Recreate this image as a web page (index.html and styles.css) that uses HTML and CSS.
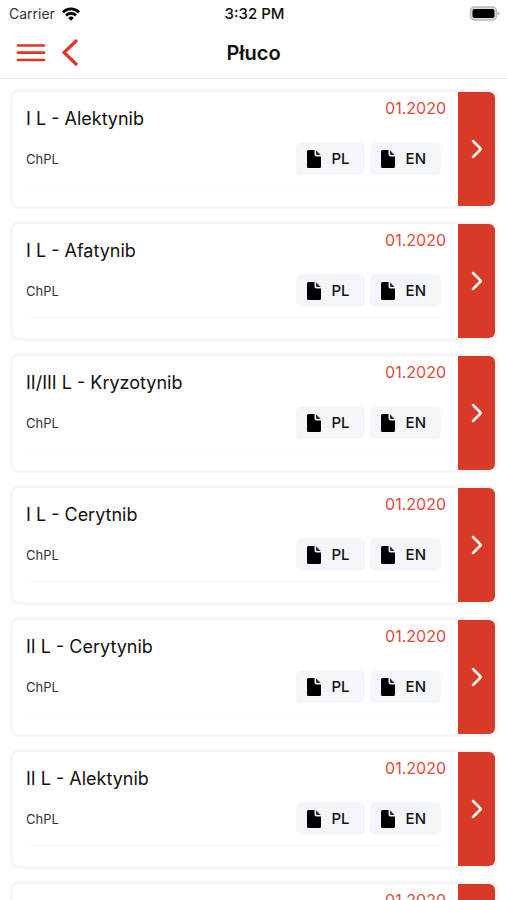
FILE: index.html
```html
<!DOCTYPE html>
<html lang="pl">
<head>
    <meta charset="UTF-8">
    <meta name="viewport" content="width=device-width, initial-scale=1.0">
    <title>Płuco</title>
    <link rel="stylesheet" href="styles.css">
</head>
<body>
    <!-- Shared icons -->
    <svg class="icon-defs" aria-hidden="true">
        <symbol id="icon-file" viewBox="0 0 14 18">
            <path d="M1.500 0H7.500v4.500Q7.500 6.500 9.500 6.500H14v10Q14 18 12.500 18h-11Q0 18 0 16.500v-15Q0 0 1.500 0z"/>
            <path d="M9 0.300 13.700 5H10Q9 5 9 4z" opacity="0.800"/>
        </symbol>
        <symbol id="icon-next" viewBox="0 0 12 20">
            <path d="M2 2l8 8-8 8" fill="none" stroke="currentColor" stroke-width="2.500" stroke-linecap="round" stroke-linejoin="round"/>
        </symbol>
    </svg>

    <div class="status-bar">
        <div class="carrier">
            <span>Carrier</span>
            <svg width="18" height="14" viewBox="0 0 18 14" fill="none" stroke="#000" stroke-width="2.700">
                <path d="M1 5.200a11.300 11.300 0 0 1 16 0"/>
                <path d="M4 8.500a7.100 7.100 0 0 1 10 0"/>
                <path d="M9 13.800 6.200 10.900a4 4 0 0 1 5.600 0z" fill="#000" stroke="none"/>
            </svg>
        </div>
        <div class="time">3:32 PM</div>
        <div class="battery">
            <svg width="31" height="15" viewBox="0 0 31 15">
                <rect x="1.500" y="1" width="26" height="13" rx="4" fill="#ddd" stroke="#b8b8b8" stroke-width="1.300"/>
                <rect x="3.500" y="3" width="22" height="9" rx="2" fill="#000"/>
                <path d="M28.500 5.500q2 0.500 2 2t-2 2z" fill="#b4b4b4"/>
            </svg>
        </div>
    </div>

    <header class="nav-bar">
        <div class="nav-buttons">
            <button type="button" aria-label="Menu">
                <svg width="30" height="20" viewBox="0 0 30 20" fill="none" stroke="currentColor" stroke-width="2.700" stroke-linecap="round">
                    <path d="M2 2.500h26M2 9.700h26M2 17h26"/>
                </svg>
            </button>
            <button type="button" aria-label="Wstecz">
                <svg width="16" height="28" viewBox="0 0 16 28" fill="none" stroke="currentColor" stroke-width="3.300" stroke-linecap="round">
                    <path d="M14 2 2 13.500l12 11.500"/>
                </svg>
            </button>
        </div>
        <h1>Płuco</h1>
    </header>

    <main class="list">
        <article class="card">
            <div class="card-body">
                <div class="card-head">
                    <h2>I L - Alektynib</h2>
                    <span class="date">01.2020</span>
                </div>
                <div class="card-docs">
                    <span class="doc-label">ChPL</span>
                    <button type="button" class="doc-btn"><svg><use href="#icon-file"/></svg>PL</button>
                    <button type="button" class="doc-btn"><svg><use href="#icon-file"/></svg>EN</button>
                </div>
            </div>
            <button type="button" class="next-btn" aria-label="Dalej"><svg><use href="#icon-next"/></svg></button>
        </article>

        <article class="card">
            <div class="card-body">
                <div class="card-head">
                    <h2>I L - Afatynib</h2>
                    <span class="date">01.2020</span>
                </div>
                <div class="card-docs">
                    <span class="doc-label">ChPL</span>
                    <button type="button" class="doc-btn"><svg><use href="#icon-file"/></svg>PL</button>
                    <button type="button" class="doc-btn"><svg><use href="#icon-file"/></svg>EN</button>
                </div>
            </div>
            <button type="button" class="next-btn" aria-label="Dalej"><svg><use href="#icon-next"/></svg></button>
        </article>

        <article class="card">
            <div class="card-body">
                <div class="card-head">
                    <h2>II/III L - Kryzotynib</h2>
                    <span class="date">01.2020</span>
                </div>
                <div class="card-docs">
                    <span class="doc-label">ChPL</span>
                    <button type="button" class="doc-btn"><svg><use href="#icon-file"/></svg>PL</button>
                    <button type="button" class="doc-btn"><svg><use href="#icon-file"/></svg>EN</button>
                </div>
            </div>
            <button type="button" class="next-btn" aria-label="Dalej"><svg><use href="#icon-next"/></svg></button>
        </article>

        <article class="card">
            <div class="card-body">
                <div class="card-head">
                    <h2>I L - Cerytnib</h2>
                    <span class="date">01.2020</span>
                </div>
                <div class="card-docs">
                    <span class="doc-label">ChPL</span>
                    <button type="button" class="doc-btn"><svg><use href="#icon-file"/></svg>PL</button>
                    <button type="button" class="doc-btn"><svg><use href="#icon-file"/></svg>EN</button>
                </div>
            </div>
            <button type="button" class="next-btn" aria-label="Dalej"><svg><use href="#icon-next"/></svg></button>
        </article>

        <article class="card">
            <div class="card-body">
                <div class="card-head">
                    <h2>II L - Cerytynib</h2>
                    <span class="date">01.2020</span>
                </div>
                <div class="card-docs">
                    <span class="doc-label">ChPL</span>
                    <button type="button" class="doc-btn"><svg><use href="#icon-file"/></svg>PL</button>
                    <button type="button" class="doc-btn"><svg><use href="#icon-file"/></svg>EN</button>
                </div>
            </div>
            <button type="button" class="next-btn" aria-label="Dalej"><svg><use href="#icon-next"/></svg></button>
        </article>

        <article class="card">
            <div class="card-body">
                <div class="card-head">
                    <h2>II L - Alektynib</h2>
                    <span class="date">01.2020</span>
                </div>
                <div class="card-docs">
                    <span class="doc-label">ChPL</span>
                    <button type="button" class="doc-btn"><svg><use href="#icon-file"/></svg>PL</button>
                    <button type="button" class="doc-btn"><svg><use href="#icon-file"/></svg>EN</button>
                </div>
            </div>
            <button type="button" class="next-btn" aria-label="Dalej"><svg><use href="#icon-next"/></svg></button>
        </article>

        <article class="card">
            <div class="card-body">
                <div class="card-head">
                    <span class="date">01.2020</span>
                </div>
            </div>
            <button type="button" class="next-btn" aria-label="Dalej"></button>
        </article>
    </main>
</body>
</html>
```
FILE: styles.css
```css
* {
    box-sizing: border-box;
}
body {
    margin: 0;
    height: 100vh;
    display: flex;
    flex-direction: column;
    background: #fefefe;
    color: #111;
    font-family: Inter, "Liberation Sans", sans-serif;
}
button {
    border: none;
    padding: 0;
    background: none;
    color: inherit;
    font: inherit;
    cursor: pointer;
}
svg {
    display: block;
}
.icon-defs {
    display: none;
}

/* Status bar */
.status-bar {
    display: grid;
    grid-template-columns: 1fr auto 1fr;
    align-items: center;
    height: 27px;
    padding: 0 7px 0 9px;
    font-size: 14px;
}
.carrier {
    display: flex;
    align-items: center;
    gap: 7px;
    color: #333;
}
.time {
    font-size: 15px;
    font-weight: 500;
}
.battery {
    justify-self: end;
}

/* Navigation */
.nav-bar {
    display: grid;
    grid-template-columns: 1fr auto 1fr;
    align-items: center;
    height: 52px;
    padding: 0 16px;
    border-bottom: 1px solid #ececec;
}
.nav-buttons {
    display: flex;
    align-items: center;
    gap: 16px;
    color: #d93a28;
}
h1 {
    margin: 0;
    font-size: 20px;
    font-weight: 600;
}

/* Cards */
.list {
    flex: 1;
    min-height: 0;
    display: flex;
    flex-direction: column;
    gap: 18px;
    padding: 13px 12px 13px 13px;
    overflow-y: auto;
    scrollbar-width: none;
}
.card {
    display: flex;
    flex: none;
    min-height: 114px;
    border-radius: 6px;
    background: #fff;
    box-shadow: 0 0 2px 3px #f6f6f6;
}
.card-body {
    flex: 1;
    padding: 6px 12px 0 13px;
}
.card-head {
    display: flex;
    justify-content: space-between;
    height: 44px;
}
h2 {
    margin: 0;
    padding-top: 9px;
    font-size: 18px;
    font-weight: 400;
    line-height: 24px;
}
.date {
    margin-left: auto;
    color: #e04a3a;
    font-size: 16px;
    line-height: 20px;
}
.card-docs {
    display: flex;
    align-items: center;
    gap: 5px;
    padding: 0 5px 10px 0;
    border-bottom: 1px solid #f8f8f8;
}
.doc-label {
    margin-right: auto;
    color: #333;
    font-size: 13px;
}
.doc-btn {
    display: flex;
    align-items: center;
    gap: 11px;
    height: 33px;
    padding: 0 15px 0 11px;
    border-radius: 6px;
    background: #f4f6f9;
    font-size: 15px;
    font-weight: 500;
}
.doc-btn svg {
    width: 14px;
    height: 18px;
}
.next-btn {
    display: flex;
    align-items: center;
    justify-content: center;
    width: 37px;
    border-radius: 0 6px 6px 0;
    background: #d93a28;
    color: #fff;
}
.next-btn svg {
    width: 12px;
    height: 20px;
}
```
